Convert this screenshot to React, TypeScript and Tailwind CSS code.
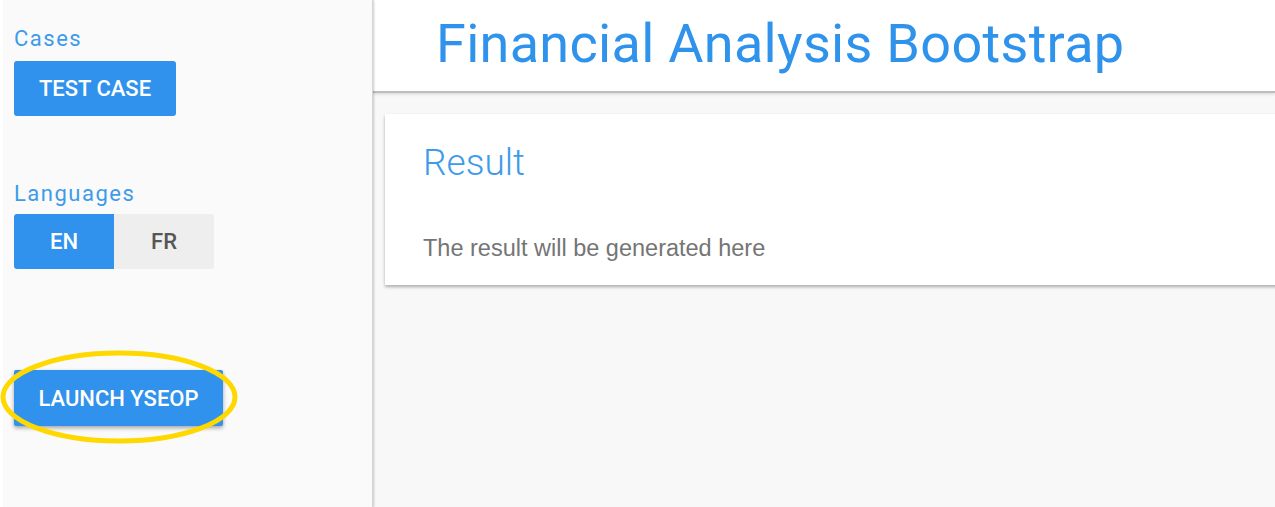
import React from "react";

export default function App() {
  return (
    <div className="flex h-[507px] w-[1275px] overflow-hidden bg-[#fafafa] font-['Roboto',sans-serif]">
      <aside className="relative flex w-[373px] shrink-0 flex-col border-l-[3px] border-r border-l-white border-r-[#d6d6d6] bg-[#fafafa] pl-[11px] shadow-[1px_0_2px_rgba(0,0,0,0.2)]">
        <div className="mt-[25px] text-[22px] leading-[28px] tracking-[1.5px] text-[#3d9be9]">Cases</div>
        <button className="mt-[8px] h-[55px] w-[162px] rounded-[3px] bg-[#3092ec] text-[22px] font-medium text-white">
          TEST CASE
        </button>
        <div className="mt-[64px] text-[22px] leading-[28px] tracking-[1.5px] text-[#3d9be9]">Languages</div>
        <div className="mt-[6px] flex">
          <button className="h-[55px] w-[100px] rounded-l-[3px] bg-[#3092ec] text-[22px] font-medium text-white">EN</button>
          <button className="h-[55px] w-[100px] rounded-r-[3px] bg-[#eeeeee] text-[22px] font-medium text-[#555555]">FR</button>
        </div>
        <div className="relative mt-[101px] w-fit">
          <button className="h-[56px] w-[209px] rounded-[2px] bg-[#3092ec] text-[22px] font-medium text-white shadow-[0_2px_4px_rgba(0,0,0,0.35)]">
            LAUNCH YSEOP
          </button>
          <svg
            className="pointer-events-none absolute left-[-14px] top-[-20px]"
            width="240"
            height="96"
            viewBox="0 0 240 96"
          >
            <ellipse cx="119" cy="47" rx="116" ry="44" fill="none" stroke="#ffd800" strokeWidth="5" />
          </svg>
        </div>
      </aside>
      <main className="flex min-w-0 flex-1 flex-col bg-[#f8f8f8]">
        <header className="h-[93px] shrink-0 border-b-2 border-[#bdbdbd] bg-white pl-[63px] shadow-[0_1px_3px_rgba(0,0,0,0.15)]">
          <h1 className="pt-[9px] text-[54px] font-normal leading-[70px] tracking-[0.3px] text-[#2f93ec]">
            Financial Analysis Bootstrap
          </h1>
        </header>
        <div className="pl-[12px] pt-[21px]">
          <section className="mr-[-20px] h-[171px] bg-white pl-[38px] shadow-[0_2px_3px_rgba(0,0,0,0.3)]">
            <h2 className="pt-[27px] text-[37px] font-light leading-[44px] text-[#3d9be9]">Result</h2>
            <p className="mt-[50px] font-['Liberation_Sans',Arial,sans-serif] text-[23.5px] leading-[26px] text-[#757575]">
              The result will be generated here
            </p>
          </section>
        </div>
      </main>
    </div>
  );
}
